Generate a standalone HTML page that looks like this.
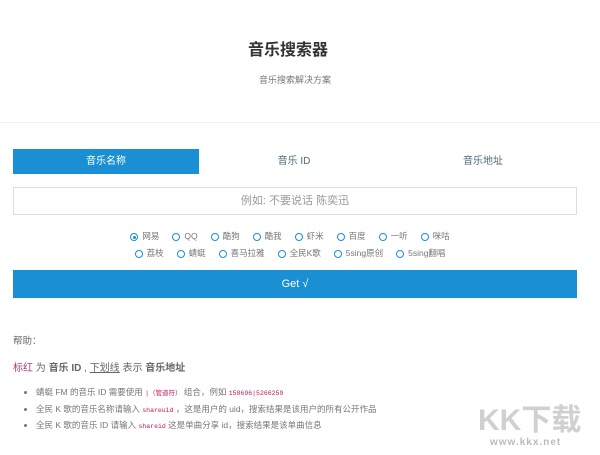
<!DOCTYPE html>
<html><head><meta charset="utf-8"><style>
body{margin:0;width:600px;height:455px;background:#fff;font-family:"Liberation Sans","Noto Sans CJK SC",sans-serif;color:#555;position:relative;overflow:hidden}
.a{position:absolute}
.hd{left:0;top:0;width:600px;height:122px;border-bottom:1px solid #f0f0f0;background:#fff}
.t{width:600px;text-align:center}
.tab{top:149px;height:25px;line-height:25px;text-align:center;font-size:10px;color:#4a6a7a}
.rad{width:580px;text-align:center;font-size:8.5px;color:#777}
.rad span{margin:0 6.5px}
.rad i{display:inline-block;width:6px;height:6px;border:1.5px solid #1a8fd4;border-radius:50%;vertical-align:-2px;margin-right:4px;position:relative}
.rad i.c:after{content:"";position:absolute;left:1.5px;top:1.5px;width:3px;height:3px;border-radius:50%;background:#1a8fd4}
ul{margin:0;padding-left:36px}
li{font-size:8.5px;color:#777;height:16.5px;line-height:16.5px}
code{font-family:"Liberation Mono",monospace;font-size:6.5px;color:#c2185b}
</style></head><body>
<div class="a hd"></div>
<div class="a t" style="top:36px;left:-12px;font-size:16px;font-weight:bold;color:#333">音乐搜索器</div>
<div class="a t" style="top:73px;left:-5px;font-size:9px;color:#777">音乐搜索解决方案</div>
<div class="a tab" style="left:13px;width:186px;background:#1a8fd4;color:#fff">音乐名称</div>
<div class="a tab" style="left:199px;width:190px">音乐 ID</div>
<div class="a tab" style="left:389px;width:188px">音乐地址</div>
<div class="a" style="left:13px;top:187px;width:562px;height:26px;border:1px solid #ddd;text-align:center;line-height:26px;font-size:11px;color:#999">例如: 不要说话 陈奕迅</div>
<div class="a rad" style="top:230px"><span><i class="c"></i>网易</span><span><i></i>QQ</span><span><i></i>酷狗</span><span><i></i>酷我</span><span><i></i>虾米</span><span><i></i>百度</span><span><i></i>一听</span><span><i></i>咪咕</span></div>
<div class="a rad" style="top:247px"><span><i></i>荔枝</span><span><i></i>蜻蜓</span><span><i></i>喜马拉雅</span><span><i></i>全民K歌</span><span><i></i>5sing原创</span><span><i></i>5sing翻唱</span></div>
<div class="a" style="left:13px;top:270px;width:564px;height:28px;background:#1a8fd4;color:#fff;text-align:center;line-height:28px;font-size:11px">Get √</div>
<div class="a" style="left:13px;top:333px;font-size:9.5px;color:#666">帮助：</div>
<div class="a" style="left:13px;top:359px;font-size:10px;color:#666"><span style="color:#b03a7a">标红</span> 为 <b>音乐 ID</b> , <u>下划线</u> 表示 <b>音乐地址</b></div>
<div class="a" style="left:0;top:384px;width:600px"><ul>
<li>蜻蜓 FM 的音乐 ID 需要使用 <code>|（管道符）</code> 组合，例如 <code>158696|5266259</code></li>
<li>全民 K 歌的音乐名称请输入 <code>shareuid</code> ，这是用户的 uid，搜索结果是该用户的所有公开作品</li>
<li>全民 K 歌的音乐 ID 请输入 <code>shareid</code> 这是单曲分享 id，搜索结果是该单曲信息</li></ul></div>
<div class="a" style="left:478px;top:395px;font-size:30px;font-weight:bold;color:#d0d0d0">KK下载</div>
<div class="a" style="left:490px;top:437px;font-size:10px;font-weight:bold;color:#bbb;letter-spacing:1px">www.kkx.net</div>
</body></html>
